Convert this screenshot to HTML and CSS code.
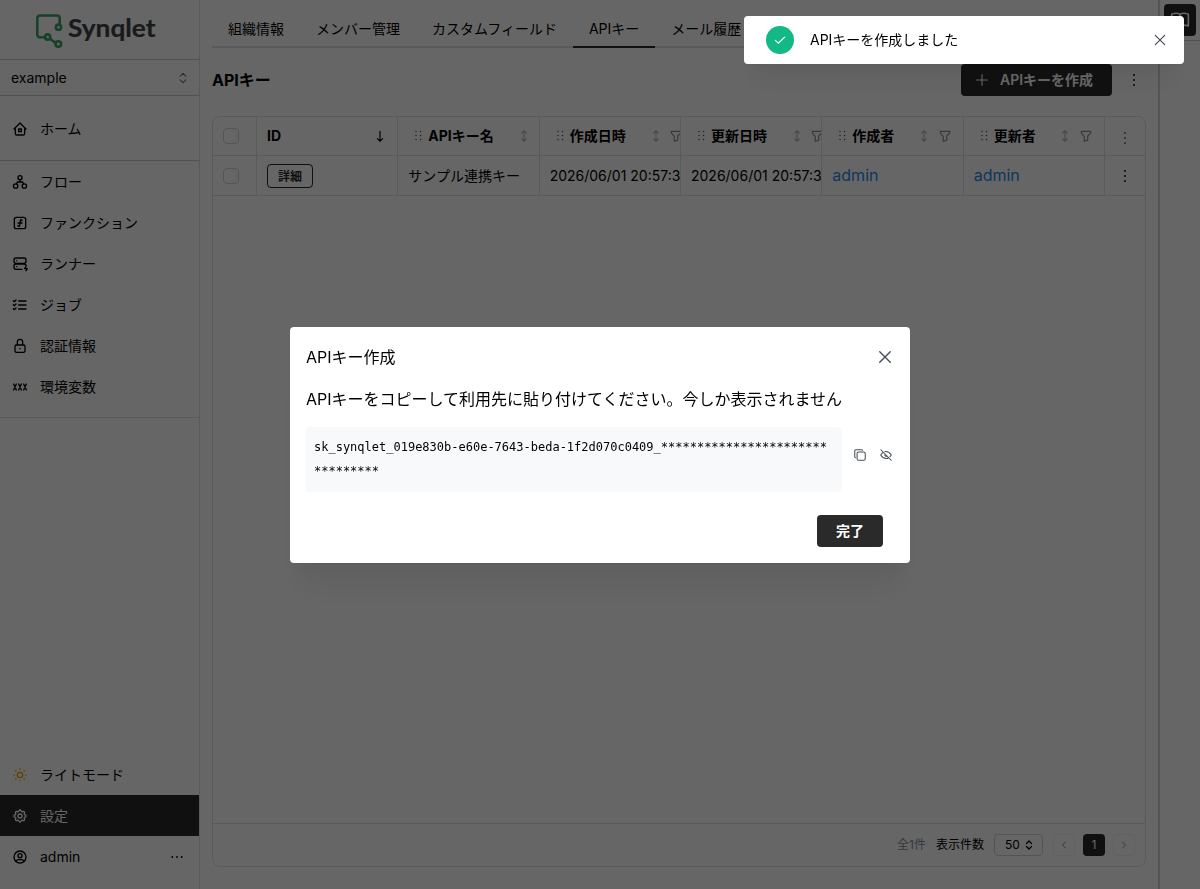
FILE: index.html
```html
<!DOCTYPE html>
<html lang="ja">
<head>
    <meta charset="UTF-8">
    <meta name="viewport" content="width=device-width, initial-scale=1.0">
    <title>APIキー - Synqlet</title>
    <link rel="stylesheet" href="styles.css">
</head>
<body>
    <!-- Shared icons -->
    <svg class="sprite" aria-hidden="true">
        <symbol id="i-dots" viewBox="0 0 24 24"><path d="M12 4.500v.01M12 12v.01M12 19.500v.01" stroke-width="2.800"/></symbol>
        <symbol id="i-close" viewBox="0 0 24 24"><path d="M5 5l14 14M19 5L5 19"/></symbol>
        <symbol id="i-grip" viewBox="0 0 8 12"><path d="M2 1.500v.01M2 5.500v.01M2 9.500v.01M6.500 1.500v.01M6.500 5.500v.01M6.500 9.500v.01" stroke-width="1.500"/></symbol>
        <symbol id="i-sort" viewBox="0 0 24 24"><path d="M8 7l4 -4l4 4M8 17l4 4l4 -4M12 3v18"/></symbol>
        <symbol id="i-filter" viewBox="0 0 24 24"><path d="M4 4h16v2.172a2 2 0 0 1 -.586 1.414l-4.414 4.414v7l-6 2v-8.500l-4.480 -4.928a2 2 0 0 1 -.52 -1.345v-2.227z"/></symbol>
        <symbol id="i-selector" viewBox="0 0 24 24"><path d="M7 9l5 -5l5 5M7 15l5 5l5 -5"/></symbol>
    </svg>

    <div class="app">
        <aside class="sidebar">
            <div class="logo">
                <svg class="logo-svg" viewBox="0 0 124 42">
                    <g fill="none" stroke="#40a068" stroke-width="2.600" stroke-linejoin="round" stroke-linecap="round">
                        <path d="M9.500 31.300h-4.500a2.700 2.700 0 0 1 -2.700 -2.700v-16.400a2.700 2.700 0 0 1 2.700 -2.700h17a2.700 2.700 0 0 1 2.700 2.700v6M15.300 33l5.300 4"/>
                        <circle cx="23.500" cy="21.200" r="2.600"/>
                        <circle cx="12.700" cy="31" r="2.600"/>
                        <circle cx="23.300" cy="38" r="2.800"/>
                    </g>
                    <text x="33" y="30.600" textLength="87.500" lengthAdjust="spacingAndGlyphs">Synqlet</text>
                </svg>
            </div>
            <div class="org-select">
                <span>example</span>
                <svg class="icon sm muted"><use href="#i-selector"/></svg>
            </div>
            <nav class="nav home-nav">
                <a class="nav-item">
                    <svg class="icon" viewBox="0 0 24 24"><path d="M5 12h-2l9 -9l9 9h-2M5 12v7a2 2 0 0 0 2 2h10a2 2 0 0 0 2 -2v-7M10 12h4v4h-4z"/></svg>
                    <span>ホーム</span>
                </a>
            </nav>
            <nav class="nav main-nav">
                <a class="nav-item">
                    <svg class="icon" viewBox="0 0 24 24"><circle cx="12" cy="5.500" r="3"/><circle cx="5.500" cy="18" r="3.300"/><circle cx="18.500" cy="18" r="3.300"/><path d="M12 9v3M7 14.500l1 -2.500h8l1 2.500"/></svg>
                    <span>フロー</span>
                </a>
                <a class="nav-item">
                    <svg class="icon" viewBox="0 0 24 24"><rect x="3.500" y="3.500" width="17" height="17" rx="3"/><path d="M9 12h6M9 15.500v.25c0 .7 .6 1.250 1.300 1.250c.7 0 1.200 -.5 1.300 -1.200l.9 -7.600c.1 -.7 .6 -1.200 1.300 -1.200c.7 0 1.200 .6 1.200 1.250v.25"/></svg>
                    <span>ファンクション</span>
                </a>
                <a class="nav-item">
                    <svg class="icon" viewBox="0 0 24 24"><rect x="3" y="3" width="18" height="8" rx="3"/><path d="M15 20h-9a3 3 0 0 1 -3 -3v-2a3 3 0 0 1 3 -3h12a3 3 0 0 1 3 3M7 7v.01M7 16v.01M21 16l-2 3h4l-2 3"/></svg>
                    <span>ランナー</span>
                </a>
                <a class="nav-item">
                    <svg class="icon" viewBox="0 0 24 24"><path d="M2 5.500l1.500 1.500l2.500 -2.500M2 11.500l1.500 1.500l2.500 -2.500M2 17.500l1.500 1.500l2.500 -2.500M10 6h11M10 12h11M10 18h11"/></svg>
                    <span>ジョブ</span>
                </a>
                <a class="nav-item">
                    <svg class="icon" viewBox="0 0 24 24"><rect x="4.500" y="10.500" width="15" height="11" rx="2"/><path d="M8 10v-4a4 4 0 0 1 8 0v4M12 15.500v.8"/></svg>
                    <span>認証情報</span>
                </a>
                <a class="nav-item">
                    <svg class="icon" viewBox="0 0 24 24"><path d="M2.500 7.500l4 9M6.500 7.500l-4 9M10 7.500l4 9M14 7.500l-4 9M17.500 7.500l4 9M21.500 7.500l-4 9"/></svg>
                    <span>環境変数</span>
                </a>
            </nav>
            <nav class="nav bottom-nav">
                <a class="nav-item">
                    <svg class="icon sun" viewBox="0 0 24 24"><circle cx="12" cy="12" r="4"/><path d="M3 12h.5M12 3v.5M20.500 12h.5M12 20.500v.5M5.600 5.600l.4 .4M18.400 5.600l-.4 .4M18 18l.4 .4M6 18l-.4 .4"/></svg>
                    <span>ライトモード</span>
                </a>
                <a class="nav-item active">
                    <svg class="icon" viewBox="0 0 24 24"><path d="M10.325 4.317c.426 -1.756 2.924 -1.756 3.350 0a1.724 1.724 0 0 0 2.573 1.066c1.543 -.94 3.310 .826 2.370 2.370a1.724 1.724 0 0 0 1.065 2.572c1.756 .426 1.756 2.924 0 3.350a1.724 1.724 0 0 0 -1.066 2.573c.94 1.543 -.826 3.310 -2.370 2.370a1.724 1.724 0 0 0 -2.572 1.065c-.426 1.756 -2.924 1.756 -3.350 0a1.724 1.724 0 0 0 -2.573 -1.066c-1.543 .94 -3.310 -.826 -2.370 -2.370a1.724 1.724 0 0 0 -1.065 -2.572c-1.756 -.426 -1.756 -2.924 0 -3.350a1.724 1.724 0 0 0 1.066 -2.573c-.94 -1.543 .826 -3.310 2.370 -2.370c1 .608 2.296 .07 2.572 -1.065z"/><circle cx="12" cy="12" r="3"/></svg>
                    <span>設定</span>
                </a>
                <a class="nav-item">
                    <svg class="icon" viewBox="0 0 24 24"><circle cx="12" cy="12" r="9"/><circle cx="12" cy="10" r="3"/><path d="M6.168 18.849a4 4 0 0 1 3.832 -2.849h4a4 4 0 0 1 3.834 2.855"/></svg>
                    <span>admin</span>
                    <svg class="icon more" viewBox="0 0 24 24"><path d="M5 12v.01M12 12v.01M19 12v.01"/></svg>
                </a>
            </nav>
        </aside>

        <main class="content">
            <div class="tabs">
                <a class="tab">組織情報</a>
                <a class="tab">メンバー管理</a>
                <a class="tab">カスタムフィールド</a>
                <a class="tab active">APIキー</a>
                <a class="tab">メール履歴</a>
            </div>
            <div class="page-head">
                <h1>APIキー</h1>
                <button class="btn create">
                    <svg class="icon" viewBox="0 0 24 24"><path d="M12 4v16M4 12h16" stroke-width="1.700"/></svg>
                    <span>APIキーを作成</span>
                </button>
                <svg class="icon"><use href="#i-dots"/></svg>
            </div>

            <div class="table-card">
                <div class="row head">
                    <div class="cell"><span class="check"></span></div>
                    <div class="cell">ID
                        <svg class="icon sm sorted" viewBox="0 0 24 24"><path d="M12 4v17M16.500 16.500l-4.500 4.500l-4.500 -4.500"/></svg>
                    </div>
                    <div class="cell drag name"><svg class="grip"><use href="#i-grip"/></svg>APIキー名
                        <svg class="icon sm sort"><use href="#i-sort"/></svg>
                    </div>
                    <div class="cell drag"><svg class="grip"><use href="#i-grip"/></svg>作成日時
                        <svg class="icon sm sort date"><use href="#i-sort"/></svg>
                        <svg class="icon sm filter"><use href="#i-filter"/></svg>
                    </div>
                    <div class="cell drag"><svg class="grip"><use href="#i-grip"/></svg>更新日時
                        <svg class="icon sm sort date"><use href="#i-sort"/></svg>
                        <svg class="icon sm filter"><use href="#i-filter"/></svg>
                    </div>
                    <div class="cell drag"><svg class="grip"><use href="#i-grip"/></svg>作成者
                        <svg class="icon sm sort"><use href="#i-sort"/></svg>
                        <svg class="icon sm filter"><use href="#i-filter"/></svg>
                    </div>
                    <div class="cell drag"><svg class="grip"><use href="#i-grip"/></svg>更新者
                        <svg class="icon sm sort"><use href="#i-sort"/></svg>
                        <svg class="icon sm filter"><use href="#i-filter"/></svg>
                    </div>
                    <div class="cell menu"><svg class="icon muted"><use href="#i-dots"/></svg></div>
                </div>
                <div class="row">
                    <div class="cell"><span class="check"></span></div>
                    <div class="cell"><button class="detail">詳細</button></div>
                    <div class="cell">サンプル連携キー</div>
                    <div class="cell">2026/06/01 20:57:3</div>
                    <div class="cell">2026/06/01 20:57:3</div>
                    <div class="cell"><a class="link">admin</a></div>
                    <div class="cell"><a class="link">admin</a></div>
                    <div class="cell menu"><svg class="icon"><use href="#i-dots"/></svg></div>
                </div>
                <div class="table-foot">
                    <span class="total">全1件</span>
                    <span>表示件数</span>
                    <span class="size">50 <svg class="icon xs"><use href="#i-selector"/></svg></span>
                    <div class="pager">
                        <span class="page off"><svg class="icon xs" viewBox="0 0 24 24"><path d="M15 6l-6 6l6 6"/></svg></span>
                        <span class="page current">1</span>
                        <span class="page off"><svg class="icon xs" viewBox="0 0 24 24"><path d="M9 6l6 6l-6 6"/></svg></span>
                    </div>
                </div>
            </div>
        </main>

        <aside class="rail">
            <div class="rail-head">
                <button class="btn book">
                    <svg class="icon" viewBox="0 0 24 24"><path d="M12 19v-14c-2.500 -1.300 -6.500 -1.300 -10 0v14c3.500 -1 7.500 -1 10 0c2.500 -1 6.500 -1 10 0v-14c-3.500 -1.300 -7.500 -1.300 -10 0"/></svg>
                </button>
            </div>
        </aside>
    </div>

    <div class="overlay">
        <section class="modal" role="dialog">
            <header class="modal-head">
                <h2>APIキー作成</h2>
                <svg class="icon close"><use href="#i-close"/></svg>
            </header>
            <p class="modal-text">APIキーをコピーして利用先に貼り付けてください。今しか表示されません</p>
            <div class="key-row">
                <code class="key">sk_synqlet_019e830b-e60e-7643-beda-1f2d070c0409_********************************</code>
                <svg class="icon key-icon" viewBox="0 0 24 24"><rect x="7" y="7" width="14" height="14" rx="2.600"/><path d="M4.012 16.737a2.005 2.005 0 0 1 -1.012 -1.737v-10c0 -1.100 .9 -2 2 -2h10c.75 0 1.158 .385 1.500 1"/></svg>
                <svg class="icon key-icon" viewBox="0 0 24 24"><path d="M10.585 10.587a2 2 0 0 0 2.829 2.828M16.681 16.673a8.717 8.717 0 0 1 -4.681 1.327c-3.600 0 -6.600 -2 -9 -6c1.272 -2.120 2.712 -3.678 4.320 -4.674m2.860 -1.146a9.055 9.055 0 0 1 1.820 -.18c3.600 0 6.600 2 9 6c-.666 1.110 -1.379 2.067 -2.138 2.870M3 3l18 18"/></svg>
            </div>
            <div class="modal-foot">
                <button class="btn done"><span>完了</span></button>
            </div>
        </section>
    </div>

    <div class="toast" role="alert">
        <span class="toast-icon">
            <svg class="icon" viewBox="0 0 24 24"><path d="M4 12.500l5 5l11 -10.500"/></svg>
        </span>
        <span>APIキーを作成しました</span>
        <svg class="icon toast-close"><use href="#i-close"/></svg>
    </div>
</body>
</html>
```

FILE: styles.css
```css
:root {
    --text-color: #000000;
    --border-color: #dee2e6;
    --button-bg: #2a2a2a;
    --link-color: #228be6;
    --muted-color: #868e96;
}

* {
    margin: 0;
    padding: 0;
    box-sizing: border-box;
}

body {
    height: 100vh;
    overflow: hidden;
    background: #ffffff;
    color: var(--text-color);
    font-family: Inter, "Noto Sans CJK JP", sans-serif;
    font-size: 14px;
    line-height: 1.55;
}

.sprite {
    position: absolute;
    width: 0;
    height: 0;
}

.icon {
    width: 16px;
    height: 16px;
    flex: none;
    fill: none;
    stroke: currentColor;
    stroke-width: 2;
    stroke-linecap: round;
    stroke-linejoin: round;
}

.icon.sm {
    width: 14px;
    height: 14px;
}

.icon.xs {
    width: 12px;
    height: 12px;
}

.muted {
    color: #666666;
}

.app {
    display: flex;
    height: 100vh;
}

/* Sidebar */
.sidebar {
    width: 200px;
    flex: none;
    display: flex;
    flex-direction: column;
    border-right: 1px solid var(--border-color);
}

.logo {
    height: 60px;
    padding: 6px 0 0 35px;
    border-bottom: 1px solid #c8ccd0;
}

.logo-svg {
    display: block;
    width: 124px;
    height: 42px;
    overflow: visible;
}

.logo-svg text {
    font-family: Lato, sans-serif;
    font-size: 25px;
    font-weight: 700;
    fill: #3c4246;
    stroke: #3c4246;
    stroke-width: 0.2px;
}

.org-select {
    display: flex;
    align-items: center;
    justify-content: space-between;
    height: 36px;
    padding: 0 9px 0 11px;
    border-bottom: 1px solid #c8ccd0;
}

.org-select .icon {
    stroke-width: 1.8;
}

.nav-item {
    display: flex;
    align-items: center;
    height: 41px;
    padding: 0 14px 0 12px;
    gap: 12px;
}

.nav-item.active {
    background: var(--button-bg);
    color: #ffffff;
}

.home-nav {
    padding: 12px 0 11px;
    border-bottom: 1px solid #c8ccd0;
}

.main-nav {
    padding-bottom: 10px;
    border-bottom: 1px solid var(--border-color);
}

.bottom-nav {
    margin-top: auto;
    padding-bottom: 12px;
}

.sun {
    color: #f59f00;
}

.more {
    margin-left: auto;
    stroke-width: 2.8;
}

/* Main area */
.content {
    flex: 1;
    min-width: 0;
    display: flex;
    flex-direction: column;
    padding: 10px 12px 22px;
}

.tabs {
    display: flex;
    height: 38px;
    border-bottom: 2px solid var(--border-color);
}

.tab {
    height: 38px;
    padding: 8px 16px 0;
    line-height: 22px;
    white-space: nowrap;
}

.tab.active {
    border-bottom: 2px solid var(--button-bg);
}

.page-head {
    display: flex;
    align-items: center;
    height: 32px;
    margin: 16px 4px 20px 0;
    gap: 14px;
}

.page-head h1 {
    margin-right: auto;
    font-size: 16px;
    font-weight: 700;
}

.btn {
    display: flex;
    align-items: center;
    justify-content: center;
    height: 32px;
    border: none;
    border-radius: 4px;
    background: var(--button-bg);
    color: #ffffff;
    font-family: inherit;
    font-size: 14px;
    font-weight: 600;
}

.btn span {
    padding-bottom: 2px;
}

.create {
    width: 151px;
    gap: 10px;
    padding-right: 6px;
}

/* Table */
.table-card {
    flex: 1;
    display: flex;
    flex-direction: column;
    border: 1px solid var(--border-color);
    border-radius: 8px;
}

.row {
    display: grid;
    grid-template-columns: 44px repeat(6, 1fr) 40px;
    height: 40px;
    border-bottom: 1px solid var(--border-color);
}

.row.head {
    height: 39px;
    font-weight: 700;
}

.cell {
    display: flex;
    align-items: center;
    min-width: 0;
    padding: 0 10px;
    overflow: hidden;
    white-space: nowrap;
    border-right: 1px solid var(--border-color);
}

.cell:last-child {
    border-right: none;
}

.cell.menu {
    padding: 0 12px;
}

.head .menu {
    padding-top: 4px;
}

.cell.drag {
    padding: 0 11px 0 16px;
}

.cell.drag.name {
    padding-right: 8px;
}

.check {
    width: 16px;
    height: 16px;
    border: 1px solid #ced4da;
    border-radius: 4px;
}

.grip {
    width: 8px;
    height: 12px;
    flex: none;
    margin-right: 6px;
    stroke: #555555;
    stroke-linecap: round;
}

.sorted {
    margin-left: auto;
}

.sort {
    margin-left: auto;
    color: #adb5bd;
}

.sort.date {
    margin-left: 23px;
}

.filter {
    margin-left: 7px;
    color: #868e96;
}

.sort.date + .filter {
    margin-left: 6px;
}

.detail {
    width: 46px;
    height: 24px;
    border: 1px solid var(--button-bg);
    border-radius: 4px;
    background: none;
    color: var(--button-bg);
    font-family: inherit;
    font-size: 12px;
    font-weight: 600;
}

.link {
    color: var(--link-color);
    font-size: 16px;
}

.table-foot {
    display: flex;
    align-items: center;
    justify-content: flex-end;
    gap: 10px;
    height: 43px;
    margin-top: auto;
    padding-right: 10px;
    border-top: 1px solid var(--border-color);
    font-size: 12px;
}

.total {
    color: var(--muted-color);
}

.size {
    display: flex;
    align-items: center;
    justify-content: center;
    gap: 3px;
    width: 49px;
    height: 22px;
    padding-left: 3px;
    border: 1px solid #ced4da;
    border-radius: 4px;
}

.size .icon {
    stroke-width: 2.6;
}

.pager {
    display: flex;
    gap: 8px;
}

.page {
    display: flex;
    align-items: center;
    justify-content: center;
    width: 22px;
    height: 22px;
    border-radius: 4px;
}

.page.off {
    border: 1px solid #f1f3f5;
    color: #868e96;
}

.page.current {
    background: var(--button-bg);
    color: #ffffff;
}

/* Right rail */
.rail {
    width: 42px;
    flex: none;
    border-left: 2px solid #ced4da;
}

.rail-head {
    height: 41px;
    padding: 4px;
    border-bottom: 1px solid #c8ccd0;
}

.book {
    width: 32px;
}

.book .icon {
    width: 20px;
    height: 20px;
}

/* Modal */
.overlay {
    position: fixed;
    inset: 0;
    display: flex;
    align-items: center;
    justify-content: center;
    background: rgba(0, 0, 0, 0.6);
}

.modal {
    width: 620px;
    height: 236px;
    padding: 16px;
    border-radius: 4px;
    background: #ffffff;
    box-shadow: 0 1px 3px rgba(0, 0, 0, 0.05), 0 36px 28px -7px rgba(0, 0, 0, 0.05), 0 17px 17px -7px rgba(0, 0, 0, 0.04);
}

.modal-head {
    display: flex;
    align-items: center;
    justify-content: space-between;
    height: 28px;
}

.modal-head h2 {
    padding-top: 1px;
    font-size: 16px;
    font-weight: 400;
}

.modal-head .close {
    width: 18px;
    height: 18px;
    color: #495057;
    stroke-width: 1.9;
}

.modal-text {
    margin: 16px 0;
    font-size: 16px;
    line-height: 24px;
    white-space: nowrap;
}

.key-row {
    display: flex;
    align-items: center;
    height: 65px;
}

.key {
    width: 536px;
    height: 65px;
    flex: none;
    margin-right: 11px;
    padding: 8px;
    border-radius: 4px;
    background: #f8f9fa;
    font-family: "DejaVu Sans Mono", monospace;
    font-size: 12px;
    line-height: 24.8px;
    word-break: break-all;
}

.key-icon {
    width: 14px;
    height: 14px;
    margin: 0 12px 8px 0;
    color: #495057;
    stroke-width: 1.8;
}

.key-icon:last-child {
    margin-right: 0;
}

.modal-foot {
    display: flex;
    justify-content: flex-end;
    padding: 23px 11px 0 0;
}

.done {
    width: 66px;
}

/* Toast */
.toast {
    position: fixed;
    top: 16px;
    right: 16px;
    display: flex;
    align-items: center;
    width: 440px;
    height: 48px;
    padding: 0 16px 0 22px;
    gap: 16px;
    border-radius: 4px;
    background: #ffffff;
    box-shadow: 0 1px 3px rgba(0, 0, 0, 0.05), 0 28px 23px -7px rgba(0, 0, 0, 0.05), 0 12px 12px -7px rgba(0, 0, 0, 0.04);
}

.toast-icon {
    display: flex;
    align-items: center;
    justify-content: center;
    width: 28px;
    height: 28px;
    border-radius: 50%;
    background: #12b886;
    color: #ffffff;
}

.toast-icon .icon {
    width: 14px;
    height: 14px;
}

.toast-close {
    margin-left: auto;
    color: #495057;
    stroke-width: 1.9;
}
```
